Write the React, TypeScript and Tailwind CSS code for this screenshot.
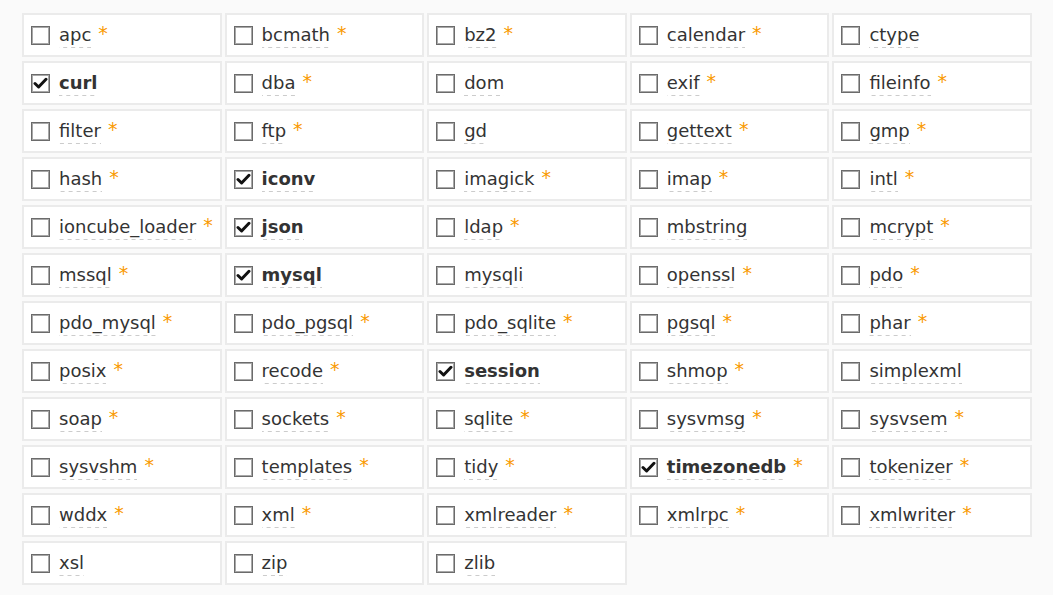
import React from 'react';

interface Extension {
    name: string;
    checked?: boolean;
    star?: boolean;
}

const extensions: Extension[] = [
    { name: 'apc', star: true },
    { name: 'bcmath', star: true },
    { name: 'bz2', star: true },
    { name: 'calendar', star: true },
    { name: 'ctype' },
    { name: 'curl', checked: true },
    { name: 'dba', star: true },
    { name: 'dom' },
    { name: 'exif', star: true },
    { name: 'fileinfo', star: true },
    { name: 'filter', star: true },
    { name: 'ftp', star: true },
    { name: 'gd' },
    { name: 'gettext', star: true },
    { name: 'gmp', star: true },
    { name: 'hash', star: true },
    { name: 'iconv', checked: true },
    { name: 'imagick', star: true },
    { name: 'imap', star: true },
    { name: 'intl', star: true },
    { name: 'ioncube_loader', star: true },
    { name: 'json', checked: true },
    { name: 'ldap', star: true },
    { name: 'mbstring' },
    { name: 'mcrypt', star: true },
    { name: 'mssql', star: true },
    { name: 'mysql', checked: true },
    { name: 'mysqli' },
    { name: 'openssl', star: true },
    { name: 'pdo', star: true },
    { name: 'pdo_mysql', star: true },
    { name: 'pdo_pgsql', star: true },
    { name: 'pdo_sqlite', star: true },
    { name: 'pgsql', star: true },
    { name: 'phar', star: true },
    { name: 'posix', star: true },
    { name: 'recode', star: true },
    { name: 'session', checked: true },
    { name: 'shmop', star: true },
    { name: 'simplexml' },
    { name: 'soap', star: true },
    { name: 'sockets', star: true },
    { name: 'sqlite', star: true },
    { name: 'sysvmsg', star: true },
    { name: 'sysvsem', star: true },
    { name: 'sysvshm', star: true },
    { name: 'templates', star: true },
    { name: 'tidy', star: true },
    { name: 'timezonedb', checked: true, star: true },
    { name: 'tokenizer', star: true },
    { name: 'wddx', star: true },
    { name: 'xml', star: true },
    { name: 'xmlreader', star: true },
    { name: 'xmlrpc', star: true },
    { name: 'xmlwriter', star: true },
    { name: 'xsl' },
    { name: 'zip' },
    { name: 'zlib' },
];

function Checkbox({ checked }: { checked?: boolean }) {
    return (
        <span className="flex h-[19px] w-[19px] shrink-0 items-center justify-center border border-[#6b6b6b] bg-white shadow-[inset_0_0_0_1px_#a8a8a8]">
            {checked && (
                <svg width="15" height="13" viewBox="0 0 15 13" fill="none">
                    <path d="M2 6.5 L5.6 10 L13 2.3" stroke="#111" strokeWidth="3" strokeLinecap="round" strokeLinejoin="round" />
                </svg>
            )}
        </span>
    );
}

function ExtensionCell({ ext }: { ext: Extension }) {
    return (
        <label className="flex h-[44px] items-center gap-[9px] border-2 border-[#ebebeb] bg-white pl-[7px]">
            <Checkbox checked={ext.checked} />
            <span className="flex items-center pt-[2px]">
                <span
                    className={`bg-[linear-gradient(to_right,#cccccc_4px,transparent_4px)] bg-[length:8px_1px] bg-bottom bg-repeat-x pb-[3px] leading-[21px] ${
                        ext.checked ? 'font-bold' : ''
                    }`}
                >
                    {ext.name}
                </span>
                {ext.star && <span className="ml-[7px] -mt-[6px] text-[19px] text-[#f99a00]">*</span>}
            </span>
        </label>
    );
}

export default function App() {
    return (
        <div className="min-h-screen w-full bg-[#fafafa] font-['DejaVu_Sans',sans-serif] text-[18px] text-[#333]">
            <div className="grid w-[1032px] grid-cols-5 gap-x-[3px] gap-y-[4px] pl-[22px] pt-[13px]">
                {extensions.map((ext) => (
                    <ExtensionCell key={ext.name} ext={ext} />
                ))}
            </div>
        </div>
    );
}
